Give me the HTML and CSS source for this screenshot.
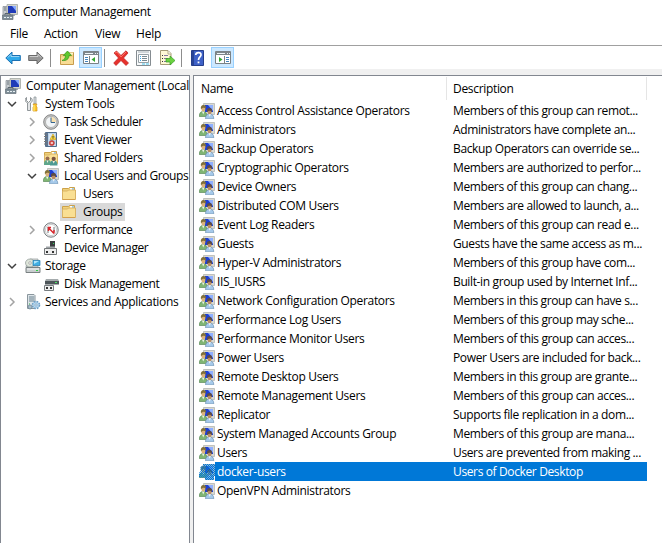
FILE: index.html
```
<!DOCTYPE html>
<html lang="en">
<head>
<meta charset="utf-8">
<title>Computer Management</title>
<link rel="stylesheet" href="styles.css">
</head>
<body>
<svg class="defs" aria-hidden="true">
  <pattern id="dither" width="2" height="2" patternUnits="userSpaceOnUse"><path d="M0 0h1v1H0zM1 1h1v1H1z" fill="#0078d7"/></pattern>
  <symbol id="computer" viewBox="0 0 16 16">
    <path d="M1 2.500h4v9H1z" fill="#c9ced2" stroke="#8b9298" stroke-width=".8"/><path d="M2 4h2M2 6h2" stroke="#69737a"/>
    <path d="M5 .5h10.500v10H5z" fill="#d5d5cd" stroke="#a3a8a4" stroke-width=".8"/>
    <path d="M6 2h8v7H6z" fill="#203bb8"/><path d="M10 2h4v5z" fill="#86a9ff"/>
    <path d="M8 10h5v2H8z" fill="#a4abb0"/>
    <path d="M.5 11h10.500v4.500H.5z" fill="#7d8d97" stroke="#657078" stroke-width=".7"/><path d="M2 13.500h2M5 13.500h2M8 13.500h2" stroke="#e7eff2"/><path d="M3 11V9.500h5V11" fill="none" stroke="#59656e"/>
  </symbol>
  <symbol id="group" viewBox="0 0 16 16">
    <path d="M4.500.5h11v11h-11z" fill="#d9d9d2" stroke="#b4b6b2" stroke-width=".8"/>
    <path d="M6 2h8v7H6z" fill="#1f3fd0"/><path d="M9 2h5v6z" fill="#8fb0ff"/>
    <path d="M.3 13.500c0-3.500 1.300-5 3.700-5s4 1.500 4 5z" fill="#7fb573" stroke="#4e7f4c" stroke-width=".6"/>
    <path d="m3 8.500 1.200 3 1.300-3z" fill="#eef5e5"/><ellipse cx="4.400" cy="6" rx="2" ry="2.600" fill="#dcb27a"/>
    <path d="M2 6.500C1.300 3.500 2.500 2 4.400 2c2 0 3 1.300 2.500 3.500C5.500 4.500 3 4.500 2 6.500z" fill="#80703a"/>
    <path d="M6.500 15.800c0-3.500 1.500-4.800 4-4.800s4.300 1.300 4.300 4.800z" fill="#a5c9ea" stroke="#5f87a8" stroke-width=".6"/>
    <path d="m9.500 11 1.200 2.800 1.200-2.800z" fill="#f3f7f5"/><ellipse cx="10.600" cy="8.800" rx="2" ry="2.500" fill="#bb8d63"/>
    <path d="M8.300 9.200C7.300 6.500 8.500 5 10.500 5s3.300 1.500 2.300 4.200C12.300 7.300 9.500 7 8.300 9.200z" fill="#5d4c45"/>
  </symbol>
  <symbol id="group-selected" viewBox="0 0 16 16">
    <use href="#group"/>
    <path d="M4 0h12v12h-1v4H6v-2.500H0V9l1.500-1.500V3L4 1.500z" fill="#0078d7" opacity=".3"/>
    <path d="M4 0h12v12h-1v4H6v-2.500H0V9l1.500-1.500V3L4 1.500z" fill="url(#dither)"/>
  </symbol>
  <symbol id="folder" viewBox="0 0 16 16">
    <path d="M1.500 2.500h6l1-1h5v12h-12z" fill="#efd17b" stroke="#cda24a"/><path d="M9 2h4v2H9z" fill="#fff"/><path d="M11 3h2" stroke="#3999dd"/><path d="M1.500 5h5l1-1h7v9.500h-13z" fill="#f9df93" stroke="#d9b364"/><path d="M2 13.500h12" stroke="#d4a04d"/>
  </symbol>
  <symbol id="tools" viewBox="0 0 16 16">
    <path d="M1.500 1.500v3l2 2 2-2v-3C8 3 7.700 6 5.500 7v7.500h-3V7C-.5 5.500-.3 2.500 1.500 1.500z" fill="#e3e5e6" stroke="#858b8f" stroke-width=".9"/>
    <path d="M9 1h2v7H9z" fill="#dce1e4" stroke="#858c90" stroke-width=".7"/><path d="M8 8h4l-1 2 1 1v4H8v-4l1-1z" fill="#ffc629" stroke="#d49217" stroke-width=".7"/><path d="M9 9v6" stroke="#fff083"/>
  </symbol>
  <symbol id="clock" viewBox="0 0 16 16">
    <circle cx="8" cy="8" r="7.300" fill="#c8c8c7" stroke="#797b7c" stroke-width=".9"/><circle cx="8" cy="8" r="5.500" fill="#f2f5f7" stroke="#9f9f9e" stroke-width=".7"/><path d="M8 8V3a5 5 0 0 1 5 5z" fill="#f8dfad"/><path d="M8 3.500v5h4" fill="none" stroke="#35658f"/>
  </symbol>
  <symbol id="event" viewBox="0 0 16 16">
    <path d="M2.500.5h11v14h-11z" fill="#bcd3ea" stroke="#506c8c"/><path d="M3 1h2v13H3z" fill="#5d7591"/><path d="M1 2h3M1 4.500h3M1 7h3M1 9.500h3M1 12h3" stroke="#777"/><path d="M6 3h6M6 5h6M6 7h6M6 13h6" stroke="#f7faff"/><path d="m10 2 3 5.500H7z" fill="#ffdc3c" stroke="#cb9c18" stroke-width=".6"/><path d="M10 4v1.800m0 .5v.6" stroke="#3b3820"/><circle cx="8.800" cy="11" r="2.600" fill="#d64a43" stroke="#9f2d2e" stroke-width=".5"/><path d="m7.800 10 2 2m0-2-2 2" stroke="#fff" stroke-width=".8"/>
  </symbol>
  <symbol id="shared" viewBox="0 0 16 16">
    <use href="#folder"/><path d="M1 15c0-4 1-5 3.500-5S8 11 8 15z" fill="#5da68b"/><circle cx="4.500" cy="8.500" r="2" fill="#986c4e"/><path d="M7 15.500c0-4 1-5 3.500-5s4 1 4 5z" fill="#4d9b93"/><circle cx="10.700" cy="8.800" r="2.100" fill="#795341"/><path d="m3.500 10.500 1 2.500 1-2.500M9.500 11l1.200 2.500L12 11" fill="#f5eddc"/>
  </symbol>
  <symbol id="performance" viewBox="0 0 16 16">
    <circle cx="8" cy="8" r="7.200" fill="#eee" stroke="#777d80"/><circle cx="8" cy="8" r="5.600" fill="#fff" stroke="#b1b5b7" stroke-width=".6"/><path d="M5 11V5M11 5v5" fill="none" stroke="#707779"/><path d="m4.800 5 6.200 6.500M5.500 9V5.500H8M11 8v3.500" fill="none" stroke="#d9252b" stroke-width="1.400"/>
  </symbol>
  <symbol id="device" viewBox="0 0 16 16">
    <path d="M7 1h5v8H7z" fill="#3b3e40"/><path d="M10 3h1v1h-1z" fill="#2ddc59"/><path d="M3 6.500h9V10H3z" fill="#9ea3a6"/><path d="M1.500 8.500h12v6h-12z" fill="#eee" stroke="#74787a"/><path d="M3 11h2v2H3zM9 11h2v2H9z" fill="#333"/>
  </symbol>
  <symbol id="storage" viewBox="0 0 16 16">
    <path d="M2 4 5 1h8v8H1z" fill="#dadede" stroke="#91999a" stroke-width=".7"/><ellipse cx="5" cy="5" rx="4.500" ry="4" fill="#dee5da" stroke="#8d9793" stroke-width=".7"/><circle cx="5" cy="5" r="1.300" fill="#fff" stroke="#777" stroke-width=".5"/><path d="M8 2.500h7v5H8z" fill="#42afe4" stroke="#267baf" stroke-width=".7"/><path d="m9 3 5 0-5 3z" fill="#b0e6fb"/><path d="M1 9.500h14v5H1z" fill="#c9cecf" stroke="#7a8182"/><path d="M2 11h12" stroke="#f5f5f5"/><path d="M11 12h2v1h-2z" fill="#31ce42"/>
  </symbol>
  <symbol id="disk" viewBox="0 0 16 16">
    <path d="M3 3h12l1 2H2z" fill="#a5abad"/><path d="M2 5h14v3.500H2z" fill="#4d5559"/><path d="M12 6h2v1h-2z" fill="#4ce866"/><path d="M1.500 9.500h9v5h-9z" fill="#eee" stroke="#777d80"/><path d="M3 11h2v2H3zM7 11h2v2H7z" fill="#333"/>
  </symbol>
  <symbol id="services" viewBox="0 0 16 16">
    <path d="M2.500.5H9l1 1v13H2.500z" fill="#dce4e8" stroke="#8a969d"/><path d="M4 3h5M4 5h5M4 7h5" stroke="#6d8391"/><path d="M4 10h1" stroke="#2db449"/><circle cx="11" cy="11" r="3.300" fill="#9ac5e7" stroke="#6e9ec5" stroke-width="2" stroke-dasharray="1.600 1"/><circle cx="11" cy="11" r="2.800" fill="#b6d6ee"/><circle cx="11" cy="11" r="1.100" fill="#fff" stroke="#6790b2" stroke-width=".6"/><circle cx="5" cy="13" r="2" fill="#a8bcc9" stroke="#667e8e" stroke-width=".7"/>
  </symbol>
  <symbol id="arrow" viewBox="0 0 16 16"><path d="M.8 8 7 2v3.500h8.300v5H7V14z" stroke-width="1"/><path d="M2.800 7.500 6 4.300v2.200h8.300" fill="none" stroke="#fff" stroke-opacity=".5"/></symbol>
  <symbol id="up" viewBox="0 0 16 16">
    <path d="M1.500 4.500h5l1-2h7v12h-13z" fill="#f3d180" stroke="#c89c4d"/><path d="M2 7h12v7H2z" fill="#f8dc95"/><path d="M10 2.500h4v2h-4z" fill="#fff6cb"/><path d="M3 10.500c2.500-1 3.500-2.500 3.500-5H4.300L8.500 1l4 4.500H10c0 3.500-2.500 5.500-7 5z" fill="#61c92f" stroke="#32931c" stroke-width=".7"/>
  </symbol>
  <symbol id="console" viewBox="0 0 16 16">
    <path d="M.5 2.500h15v12H.5z" fill="#fff" stroke="#7b8286"/><path d="M1 3h14v3H1z" fill="#7d868b"/><path d="M2 4.500h8M12 4.500h1M14 4.500h1" stroke="#eef4f7"/><path d="M6.500 7v7" stroke="#7b8286"/><path d="M2 8.500h3M2 10.500h3M2 12.500h3" stroke="#4384bd"/><path d="M12 8v5l-3.500-2.500z" fill="#33a830"/>
  </symbol>
  <symbol id="action-pane" viewBox="0 0 16 16">
    <path d="M.5 2.500h15v12H.5z" fill="#fff" stroke="#7b8286"/><path d="M1 3h14v3H1z" fill="#7d868b"/><path d="M2 4.500h8M12 4.500h1M14 4.500h1" stroke="#eef4f7"/><path d="M9.500 7v7" stroke="#7b8286"/><path d="M11 8.500h3M11 10.500h3M11 12.500h3" stroke="#4384bd"/><path d="M4 8v5l3.500-2.500z" fill="#33a830"/>
  </symbol>
  <symbol id="delete" viewBox="0 0 16 16"><path d="m1 3 2.500-2L8 5.500 13 .8 15 3l-4.500 5 5 5-2.500 2.500-5-5-5 5L.7 13 5.500 8z" fill="#e7312c" stroke="#bd2020" stroke-width=".7"/><path d="m2 3 2-1 4 5 5-5" fill="none" stroke="#ff8173" stroke-width=".8"/></symbol>
  <symbol id="properties" viewBox="0 0 16 16"><path d="M.5.5h14v15H.5z" fill="#f7f9fa" stroke="#858c91"/><path d="M2 2h11" stroke="#a9b2b7"/><path d="M2.500 4.500h10v8h-10z" fill="#fff" stroke="#96a0a6"/><path d="M6 6.500h5M6 8.500h5M6 10.500h5" stroke="#798991"/><path d="M4 6.500h1M4 8.500h1M4 10.500h1" stroke="#32aaf0"/><path d="M6 14h3m1 0h3" stroke="#46c4ec"/></symbol>
  <symbol id="export" viewBox="0 0 16 16"><path d="M1.500.5H9l3 3v11H1.500z" fill="#fff8d6" stroke="#a69b77"/><path d="M9 1v3h3" fill="#fff" stroke="#b4aa88"/><path d="M3 5.500h1M3 8.500h1M3 11.500h1" stroke="#333"/><path d="M5 5.500h4M5 8.500h4M5 11.500h3" stroke="#8477a2"/><path d="M7 8.500h4V6l5 4.500-5 4.500v-3H7z" fill="#6bd240" stroke="#359c25" stroke-width=".7"/></symbol>
  <symbol id="help" viewBox="0 0 16 16"><path d="M1.500.5h12v15h-12z" fill="#3e61c7" stroke="#263e8b"/><path d="M2 1h2v14H2z" fill="#284496"/><path d="M5.700 5C6 1.500 11.500 2 11 5c-.2 2-2.500 2-2.500 5" fill="none" stroke="#fff" stroke-width="1.700"/><path d="M7.600 11.500h1.800v1.800H7.600z" fill="#fff"/></symbol>
  <symbol id="chevron" viewBox="0 0 10 10"><path d="m3 1 4 4-4 4" fill="none" stroke="currentColor" stroke-width="1.500"/></symbol>
</svg>
<div class="window">
  <header class="titlebar"><svg class="icon"><use href="#computer"/></svg><h1>Computer Management</h1></header>
  <nav class="menu"><span class="file">File</span><span class="action">Action</span><span class="view">View</span><span class="help">Help</span></nav>
  <div class="toolbar">
    <svg class="icon back"><use href="#arrow"/></svg><svg class="icon forward"><use href="#arrow"/></svg><i class="rule"></i>
    <svg class="icon up"><use href="#up"/></svg><span class="toggle first"><svg class="icon"><use href="#console"/></svg></span><i class="rule near"></i>
    <svg class="icon delete"><use href="#delete"/></svg><svg class="icon properties"><use href="#properties"/></svg><svg class="icon export"><use href="#export"/></svg><i class="rule"></i>
    <svg class="icon question"><use href="#help"/></svg><span class="toggle second"><svg class="icon"><use href="#action-pane"/></svg></span>
  </div>
  <main class="panes">
    <aside class="tree">
      <div class="node root"><svg class="icon"><use href="#computer"/></svg><span class="label">Computer Management (Local</span></div>
      <div class="node one"><svg class="chevron open"><use href="#chevron"/></svg><svg class="icon"><use href="#tools"/></svg><span class="label">System Tools</span></div>
      <div class="node two"><svg class="chevron"><use href="#chevron"/></svg><svg class="icon"><use href="#clock"/></svg><span class="label">Task Scheduler</span></div>
      <div class="node two"><svg class="chevron"><use href="#chevron"/></svg><svg class="icon"><use href="#event"/></svg><span class="label">Event Viewer</span></div>
      <div class="node two"><svg class="chevron"><use href="#chevron"/></svg><svg class="icon"><use href="#shared"/></svg><span class="label">Shared Folders</span></div>
      <div class="node two"><svg class="chevron open"><use href="#chevron"/></svg><svg class="icon"><use href="#group"/></svg><span class="label">Local Users and Groups</span></div>
      <div class="node three"><svg class="icon"><use href="#folder"/></svg><span class="label">Users</span></div>
      <div class="node three current"><svg class="icon"><use href="#folder"/></svg><span class="label">Groups</span></div>
      <div class="node two"><svg class="chevron"><use href="#chevron"/></svg><svg class="icon"><use href="#performance"/></svg><span class="label">Performance</span></div>
      <div class="node two leaf"><svg class="icon"><use href="#device"/></svg><span class="label">Device Manager</span></div>
      <div class="node one"><svg class="chevron open"><use href="#chevron"/></svg><svg class="icon"><use href="#storage"/></svg><span class="label">Storage</span></div>
      <div class="node two leaf"><svg class="icon"><use href="#disk"/></svg><span class="label">Disk Management</span></div>
      <div class="node one"><svg class="chevron"><use href="#chevron"/></svg><svg class="icon"><use href="#services"/></svg><span class="label">Services and Applications</span></div>
    </aside>
    <section class="list">
      <div class="head"><span>Name</span><span>Description</span></div>
      <div class="row"><svg class="icon"><use href="#group"/></svg><span>Access Control Assistance Operators</span><span>Members of this group can remot...</span></div>
      <div class="row"><svg class="icon"><use href="#group"/></svg><span>Administrators</span><span>Administrators have complete an...</span></div>
      <div class="row"><svg class="icon"><use href="#group"/></svg><span>Backup Operators</span><span>Backup Operators can override se...</span></div>
      <div class="row"><svg class="icon"><use href="#group"/></svg><span>Cryptographic Operators</span><span>Members are authorized to perfor...</span></div>
      <div class="row"><svg class="icon"><use href="#group"/></svg><span>Device Owners</span><span>Members of this group can chang...</span></div>
      <div class="row"><svg class="icon"><use href="#group"/></svg><span>Distributed COM Users</span><span>Members are allowed to launch, a...</span></div>
      <div class="row"><svg class="icon"><use href="#group"/></svg><span>Event Log Readers</span><span>Members of this group can read e...</span></div>
      <div class="row"><svg class="icon"><use href="#group"/></svg><span>Guests</span><span>Guests have the same access as m...</span></div>
      <div class="row"><svg class="icon"><use href="#group"/></svg><span>Hyper-V Administrators</span><span>Members of this group have com...</span></div>
      <div class="row"><svg class="icon"><use href="#group"/></svg><span>IIS_IUSRS</span><span>Built-in group used by Internet Inf...</span></div>
      <div class="row"><svg class="icon"><use href="#group"/></svg><span>Network Configuration Operators</span><span>Members in this group can have s...</span></div>
      <div class="row"><svg class="icon"><use href="#group"/></svg><span>Performance Log Users</span><span>Members of this group may sche...</span></div>
      <div class="row"><svg class="icon"><use href="#group"/></svg><span>Performance Monitor Users</span><span>Members of this group can acces...</span></div>
      <div class="row"><svg class="icon"><use href="#group"/></svg><span>Power Users</span><span>Power Users are included for back...</span></div>
      <div class="row"><svg class="icon"><use href="#group"/></svg><span>Remote Desktop Users</span><span>Members in this group are grante...</span></div>
      <div class="row"><svg class="icon"><use href="#group"/></svg><span>Remote Management Users</span><span>Members of this group can acces...</span></div>
      <div class="row"><svg class="icon"><use href="#group"/></svg><span>Replicator</span><span>Supports file replication in a dom...</span></div>
      <div class="row"><svg class="icon"><use href="#group"/></svg><span>System Managed Accounts Group</span><span>Members of this group are mana...</span></div>
      <div class="row"><svg class="icon"><use href="#group"/></svg><span>Users</span><span>Users are prevented from making ...</span></div>
      <div class="row selected"><svg class="icon"><use href="#group-selected"/></svg><span>docker-users</span><span>Users of Docker Desktop</span></div>
      <div class="row"><svg class="icon"><use href="#group"/></svg><span>OpenVPN Administrators</span><span></span></div>
    </section>
  </main>
</div>
</body>
</html>
```
FILE: styles.css
```
* { box-sizing: border-box; }
body { margin: 0; background: #fff; color: #000; font: 12px/18px "Open Sans", "Noto Sans", sans-serif; letter-spacing: -0.32px; overflow: hidden; }
.defs { position: absolute; width: 0; height: 0; }
.window { width: 662px; height: 543px; display: flex; flex-direction: column; white-space: nowrap; }
.icon { width: 16px; height: 16px; flex: none; display: block; }
.titlebar { height: 23px; display: flex; align-items: center; gap: 5px; padding: 0 0 0 2px; }
.titlebar h1 { margin: 0; font: inherit; }
.menu { height: 22px; display: flex; align-items: center; padding-left: 10px; letter-spacing: -0.22px; }
.menu .file { width: 34px; }
.menu .action { width: 51px; }
.menu .view { width: 41px; }
.toolbar { height: 24px; flex: none; display: flex; align-items: center; padding-left: 5px; border-top: 1px solid #a0a0a0; }
.back { fill: #30a9e9; stroke: #1b70b2; margin-right: 7px; }
.forward { fill: #969696; stroke: #696969; transform: scaleX(-1); margin-right: 6px; }
.rule { width: 1px; height: 18px; background: #8d8d8d; flex: none; }
.up { margin: 0 4px 0 8px; }
.toggle { width: 23px; height: 21px; padding: 1px 3px; border: 1px solid #99d1ff; background: #cce8ff; flex: none; }
.near { margin-left: 2px; }
.delete { margin: 0 7px 0 8px; }
.properties { margin-right: 7px; }
.export { margin-right: 6px; }
.question { margin: 0 5px 0 8px; }
.panes { flex: 1; min-height: 0; display: flex; gap: 3px; padding-top: 6px; background: #f0f0f0; }
.tree { width: 190px; border: 1px solid #828790; border-bottom: 0; background: #fff; padding-top: 1px; overflow: hidden; }
.node { height: 18px; display: flex; align-items: center; }
.root { padding-left: 4px; letter-spacing: -0.25px; }
.one { padding-left: 6px; }
.two { padding-left: 26px; letter-spacing: -0.38px; }
.leaf { padding-left: 42px; }
.three { padding-left: 60px; }
.root .label { margin-left: 5px; }
.one .label { margin-left: 4px; }
.two .label { margin-left: 5px; }
.three .label { margin-left: 6px; }
.chevron { width: 10px; height: 10px; flex: none; color: #a3a3a3; margin-right: 6px; }
.one .chevron { margin-right: 8px; }
.open { transform: rotate(90deg); color: #404040; }
.current { width: 65px; margin-left: 59px; padding-left: 1px; background: #d9d9d9; }
.list { flex: 1; min-width: 0; border: 1px solid #828790; border-right: 0; border-bottom: 0; background: #fff; padding-top: 1px; }
.head { height: 24px; display: flex; line-height: 24px; }
.head span { width: 200px; padding-left: 6px; height: 23px; border-right: 1px solid #e5e5e5; }
.head span:first-child { width: 253px; padding-left: 7px; }
.row { height: 19px; line-height: 19px; width: 453px; padding-left: 5px; display: grid; grid-template-columns: 16px 236px 196px; align-items: center; }
.row span { height: 19px; padding-left: 2px; }
.row span:last-child { letter-spacing: -0.37px; }
.selected span { background: #0078d7; color: #fff; }
```
